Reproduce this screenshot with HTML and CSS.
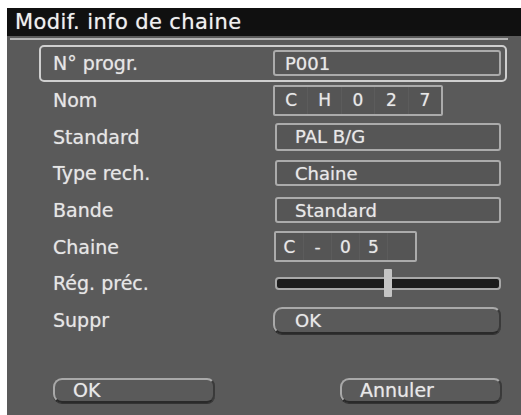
FILE: index.html
```html
<!DOCTYPE html>
<html lang="fr">
<head>
<meta charset="utf-8">
<title>Modif. info de chaine</title>
<link rel="stylesheet" href="styles.css">
</head>
<body>
<div class="screen">
  <div class="titlebar">Modif. info de chaine</div>
  <div class="rule"></div>
  <div class="rows">
    <div class="row active">
      <div class="label">N° progr.</div>
      <div class="value box box-p">P001</div>
    </div>
    <div class="row">
      <div class="label">Nom</div>
      <div class="value seg seg-nom">
        <span class="cell">C</span><span class="cell">H</span><span class="cell">0</span><span class="cell">2</span><span class="cell">7</span>
      </div>
    </div>
    <div class="row">
      <div class="label">Standard</div>
      <div class="value box box-tall">PAL B/G</div>
    </div>
    <div class="row">
      <div class="label">Type rech.</div>
      <div class="value box">Chaine</div>
    </div>
    <div class="row">
      <div class="label">Bande</div>
      <div class="value box">Standard</div>
    </div>
    <div class="row">
      <div class="label">Chaine</div>
      <div class="value seg seg-ch">
        <span class="cell">C</span><span class="cell">-</span><span class="cell">0</span><span class="cell">5</span><span class="cell"></span>
      </div>
    </div>
    <div class="row">
      <div class="label">Rég. préc.</div>
      <div class="value slider">
        <div class="track"></div>
        <div class="thumb"></div>
      </div>
    </div>
    <div class="row">
      <div class="label">Suppr</div>
      <div class="value btn btn-wide">OK</div>
    </div>
  </div>
  <div class="actions">
    <div class="btn btn-action">OK</div>
    <div class="btn btn-action btn-cancel">Annuler</div>
  </div>
</div>
</body>
</html>
```

FILE: styles.css
```css
html, body {
  margin: 0;
  padding: 0;
  background: #ffffff;
}

body {
  font-family: "DejaVu Sans", "Liberation Sans", sans-serif;
  color: #e4e4e4;
}

.screen {
  margin: 8px 0 0 7px;
  width: 514px;
  height: 407px;
  background: #5a5a5a;
  display: flex;
  flex-direction: column;
  overflow: hidden;
  text-shadow: 0 0 1px rgba(230, 230, 230, 0.6);
}

.titlebar {
  height: 28px;
  background: #101010;
  font-size: 21px;
  line-height: 28px;
  padding-left: 8px;
  color: #f0f0f0;
  letter-spacing: 0.4px;
}

.rule {
  margin: 2px 0 0 3px;
  width: 498px;
  height: 2px;
  background: #b4b4b4;
}

.rows {
  margin: 5px 0 0 32px;
  width: 468px;
  display: flex;
  flex-direction: column;
}

.row {
  height: 36.7px;
  box-sizing: border-box;
  border: 2px solid transparent;
  border-radius: 5px;
  display: flex;
  align-items: center;
}

.row.active {
  border-color: #cfcfcf;
}

.label {
  width: 220px;
  padding-left: 12px;
  font-size: 19px;
  color: #e6e6e6;
}

.value {
  box-sizing: border-box;
  font-size: 18px;
  color: #e8e8e8;
}

.box {
  width: 226px;
  height: 26px;
  margin-left: 2px;
  border: 2px solid #ababab;
  border-radius: 3px;
  background: #565656;
  display: flex;
  align-items: center;
  padding-left: 18px;
}

.box-p {
  width: 228px;
  margin-left: 0;
  padding-left: 10px;
}

.box-tall {
  height: 28px;
}

.seg {
  height: 31px;
  border: 2px solid #ababab;
  border-radius: 2px;
  display: flex;
  background: #555555;
}

.seg-nom {
  width: 170px;
}

.seg-ch {
  width: 143px;
  margin-left: 1px;
}

.cell {
  flex: 1;
  display: flex;
  align-items: center;
  justify-content: center;
  border-right: 1px solid #5c5c5c;
  font-size: 17px;
}

.cell:last-child {
  border-right: none;
}

.slider {
  position: relative;
  width: 226px;
  height: 28px;
  margin-left: 2px;
  display: flex;
  align-items: center;
}

.track {
  width: 100%;
  height: 13px;
  box-sizing: border-box;
  border: 2px solid #a8a8a8;
  border-radius: 4px;
  background: #1c1c1c;
}

.thumb {
  position: absolute;
  left: 109px;
  top: 0;
  width: 8px;
  height: 28px;
  background: #c4c4c4;
  border-radius: 1px;
}

.btn {
  box-sizing: border-box;
  border: 2px solid #a9a9a9;
  border-bottom-color: #2a2a2a;
  border-right-color: #3a3a3a;
  border-radius: 9px 8px 8px 9px;
  box-shadow: 0 1px 0 #333333;
  display: flex;
  align-items: center;
  color: #e8e8e8;
}

.btn-wide {
  width: 228px;
  height: 27px;
  padding-left: 20px;
  font-size: 18px;
}

.actions {
  margin: 39px 0 0 46px;
  width: 449px;
  display: flex;
  justify-content: space-between;
}

.btn-action {
  width: 162px;
  height: 25px;
  padding-left: 18px;
  font-size: 19px;
}

.btn-cancel {
  padding-left: 18px;
}
```
